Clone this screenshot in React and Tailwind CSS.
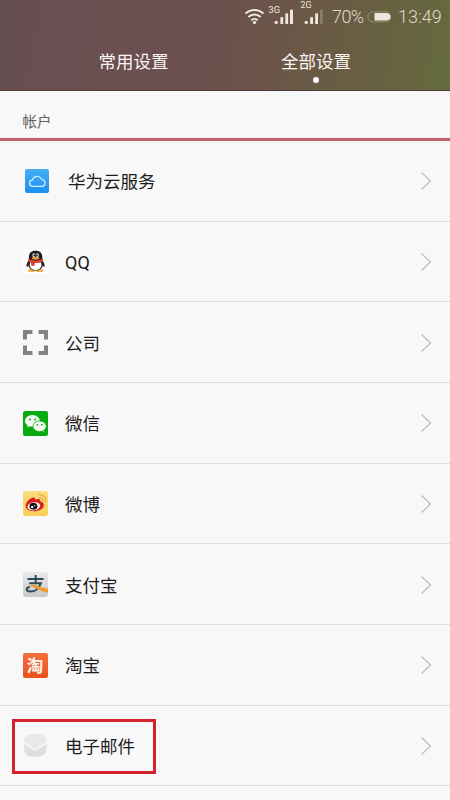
import React from 'react';

function CloudIcon() {
  return (
    <svg viewBox="0 0 24 24" className="ml-[2px] h-6 w-6">
      <defs>
        <linearGradient id="cloud" x1="0" y1="0" x2="0" y2="1">
          <stop offset="0" stopColor="#46aef6" />
          <stop offset="1" stopColor="#1d8fee" />
        </linearGradient>
      </defs>
      <rect width="24" height="24" rx="2.2" fill="url(#cloud)" />
      <path
        d="M7.2 17.4h9.8a3.3 3.3 0 0 0 .6-6.5 1.7 1.7 0 0 0-1.5-1.1 4.6 4.6 0 0 0-8.6 1.1 3.3 3.3 0 0 0-.3 6.5z"
        fill="none"
        stroke="#d4f0ff"
        strokeWidth="1.2"
      />
    </svg>
  );
}

function QQIcon() {
  return (
    <svg viewBox="0 0 25 25" className="h-[25px] w-[25px]">
      <rect width="25" height="25" rx="3" fill="#fdfdfd" />
      <ellipse cx="8.6" cy="21.4" rx="3.8" ry="1.7" fill="#f0b340" />
      <ellipse cx="16.6" cy="21.4" rx="3.8" ry="1.7" fill="#f0b340" />
      <path d="M6.6 10.5C4.2 13 2.9 16.4 3.8 17.6c.6.6 1.6-.4 2.2-1.3h13.2c.6.9 1.6 1.9 2.2 1.3.9-1.2-.5-4.6-2.8-7.1z" fill="#22212a" />
      <ellipse cx="12.6" cy="15.2" rx="7.4" ry="6.4" fill="#22212a" />
      <ellipse cx="12.6" cy="15.8" rx="5.9" ry="5.2" fill="#fff" />
      <path d="M5.9 10.6V7.8C5.9 3.8 8.8 1.7 12.6 1.7s6.7 2.1 6.7 6.1v2.8c-2.8 2.4-10.6 2.4-13.4 0z" fill="#1e1d25" />
      <ellipse cx="10.8" cy="6.2" rx="1.4" ry="2" fill="#e6e6e6" />
      <ellipse cx="14.4" cy="6.2" rx="1.4" ry="2" fill="#e6e6e6" />
      <circle cx="11.2" cy="6.4" r=".8" fill="#111" />
      <circle cx="14" cy="6.4" r=".8" fill="#111" />
      <ellipse cx="12.6" cy="9.3" rx="3.9" ry="1.2" fill="#eba42c" />
      <path d="M5.5 9.6c4.2 2.6 10.1 2.6 14.3 0l.4 2.6c-2.7 1.5-5.5 2-8.5 1.8v2.4l-3.4.6-.2-3.4-3.2-1.3z" fill="#da3f32" />
    </svg>
  );
}

function CompanyIcon() {
  return (
    <svg viewBox="0 0 25 25" className="h-[25px] w-[25px]">
      <path d="M2 9.4V2h7.4M15.6 2H23v7.4M23 15.6V23h-7.4M9.4 23H2v-7.4" fill="none" stroke="#828282" strokeWidth="4" />
    </svg>
  );
}

function WechatIcon() {
  return (
    <svg viewBox="0 0 25 25" className="h-[25px] w-[25px]">
      <rect width="25" height="25" rx="2" fill="#08ac10" />
      <path d="M5 13l-.7 3.4 3.2-1.7z" fill="#f4fcf1" />
      <ellipse cx="9.4" cy="9.9" rx="7.5" ry="5.9" fill="#f4fcf1" />
      <path d="M20 18.2l1 2.8-3-1.4z" fill="#f4fcf1" />
      <ellipse cx="16.6" cy="15.3" rx="6.7" ry="5.3" fill="#f4fcf1" stroke="#08ac10" strokeWidth=".8" />
      <circle cx="6.9" cy="8.4" r="1" fill="#20912a" />
      <circle cx="12" cy="8.4" r="1" fill="#20912a" />
      <circle cx="14.2" cy="13.8" r=".9" fill="#20912a" />
      <circle cx="18.8" cy="13.8" r=".9" fill="#20912a" />
    </svg>
  );
}

function WeiboIcon() {
  return (
    <svg viewBox="0 0 25 25" className="h-[25px] w-[25px]">
      <defs>
        <linearGradient id="weibo" x1="0" y1="0" x2="0" y2="1">
          <stop offset="0" stopColor="#fbdc7c" />
          <stop offset="1" stopColor="#f8cf57" />
        </linearGradient>
      </defs>
      <rect width="25" height="25" rx="3" fill="url(#weibo)" />
      <path
        d="M2.6 14.8c0-3.4 4.6-8 7.7-8.2 1.5-.1 2 .8 1.7 2.2 2.6-1.2 5.7-1.1 5.4 1.6 5.2 1.2 4 5.9.5 8.1-5.2 3.3-15.3 2.1-15.3-3.7z"
        fill="#dc2022"
      />
      <ellipse cx="10.8" cy="15.3" rx="6.3" ry="4.1" transform="rotate(-8 10.8 15.3)" fill="#fff" />
      <ellipse cx="10.4" cy="15.3" rx="4" ry="3.5" fill="#1b1718" />
      <circle cx="9.2" cy="16.1" r="1.2" fill="#fff" />
      <circle cx="11.6" cy="14.6" r=".6" fill="#fff" />
      <path d="M16.5 6.9c2-.3 3.5 1.4 3 3.2M16.3 3.7c4-.6 7 2.9 5.9 6.6" fill="none" stroke="#eca94b" strokeWidth="1.3" strokeLinecap="round" />
    </svg>
  );
}

function AlipayIcon() {
  return (
    <svg viewBox="0 0 25 25" className="h-[25px] w-[25px]">
      <defs>
        <linearGradient id="pay" x1="0" y1="0" x2="0" y2="1">
          <stop offset="0" stopColor="#e9e9e9" />
          <stop offset="1" stopColor="#c9c9c9" />
        </linearGradient>
      </defs>
      <rect width="25" height="25" rx="3" fill="url(#pay)" />
      <path d="M4.5 7h16M12.7 3v8.5M6.2 11.3h11.6c-1.6 4.6-5.6 8.3-10.4 8.3-4.8 0-4.8-4.6-.6-4.6" fill="none" stroke="#2b4a5c" strokeWidth="2" />
      <path d="M5.3 14.2c3.4-1.9 7.4-1.2 10.5 0 3.3 1.3 6 2.1 9.2 2.4v4c-4.8-.4-8.4-2.2-11.3-4-2.8-1.7-5.5-2.7-8.4-2.4z" fill="#f39a2e" />
    </svg>
  );
}

function TaobaoIcon() {
  return (
    <div className="flex h-[25px] w-[25px] items-center justify-center rounded-[2px] bg-linear-to-b from-[#f3703e] to-[#ed501c] text-[16.5px] leading-none font-bold text-[#fff8f0]">
      <span className="-mt-[1px]">淘</span>
    </div>
  );
}

function MailIcon() {
  return (
    <svg viewBox="0 0 25 25" className="h-[25px] w-[25px]">
      <defs>
        <linearGradient id="mail" x1="0" y1="0" x2="0" y2="1">
          <stop offset="0" stopColor="#e6e6e8" />
          <stop offset="1" stopColor="#dcdde1" />
        </linearGradient>
      </defs>
      <rect x="1" y="1" width="22.5" height="22.5" rx="7.5" fill="url(#mail)" />
      <path d="M1.2 10.5l9.7 6.1q1.4.9 2.8 0l9.6-6.1C22.8 4.2 20 1.5 16 1.3H8.5C4.3 1.5 1.7 4.2 1.2 10.5z" fill="#e9e9eb" />
      <path d="M1.5 10.3l9.4 6.3q1.4.9 2.8 0l9.4-6.3" fill="none" stroke="#fbfbfb" strokeWidth="1.2" />
    </svg>
  );
}

const rows = [
  { label: '华为云服务', Icon: CloudIcon, wide: true },
  { label: 'QQ', Icon: QQIcon, latin: true },
  { label: '公司', Icon: CompanyIcon },
  { label: '微信', Icon: WechatIcon },
  { label: '微博', Icon: WeiboIcon },
  { label: '支付宝', Icon: AlipayIcon },
  { label: '淘宝', Icon: TaobaoIcon },
  { label: '电子邮件', Icon: MailIcon, marked: true },
];

function Row({ label, Icon, wide, latin, marked }) {
  return (
    <li className="relative flex h-[80.67px] shrink-0 items-center border-b border-[#dedede] pt-[1px] pr-[18px] pl-[22.5px]">
      <Icon />
      <span
        className={
          (wide ? 'ml-[19.5px]' : 'ml-[17.5px]') +
          (latin ? ' pt-[2px] font-[Roboto] text-[18px]' : ' text-[17.5px]') +
          ' leading-6 text-[#1c1c1c]'
        }
      >
        {label}
      </span>
      <svg viewBox="0 0 12 20" className="ml-auto h-5 w-3">
        <path d="M1.5 1.5L10.5 10l-9 8.5" fill="none" stroke="#b9b9b9" strokeWidth="1.1" />
      </svg>
      {marked && <div className="absolute top-[13px] left-[12px] h-[55px] w-[144px] border-[3px] border-[#d4232f]" />}
    </li>
  );
}

function StatusBar() {
  return (
    <div className="flex h-[33px] items-center justify-end pr-[8px] text-[#e0d9cf]">
      <svg viewBox="0 0 88 33" className="h-[33px] w-[88px]">
        <g fill="none" stroke="#eee6df" strokeWidth="2">
          <path d="M1.5 13.6a12.8 12.8 0 0 1 18 0M4.4 17a8.7 8.7 0 0 1 12.2 0M7.3 20.2a4.6 4.6 0 0 1 6.4 0" />
        </g>
        <circle cx="10.5" cy="22.4" r="1.6" fill="#eee6df" />
        <g fill="#eee6df">
          <circle cx="32.2" cy="22.4" r="1.7" />
          <rect x="36.4" y="17.2" width="2.8" height="6.8" />
          <rect x="41.3" y="13.4" width="2.8" height="10.6" />
          <rect x="46" y="9.7" width="3" height="14.3" />
          <circle cx="62.2" cy="22.4" r="1.7" />
          <rect x="66.2" y="17.2" width="2.8" height="6.8" />
          <rect x="71.2" y="13.4" width="2.8" height="10.6" />
          <rect x="76" y="9.7" width="2.8" height="14.3" opacity=".25" />
          <text x="24.5" y="13" fontSize="8.5" fontFamily="Roboto" textLength="11.5" lengthAdjust="spacingAndGlyphs">3G</text>
          <text x="56.5" y="8" fontSize="8.5" fontFamily="Roboto" textLength="11" lengthAdjust="spacingAndGlyphs">2G</text>
        </g>
      </svg>
      <span className="w-[34px] pt-[1px] font-[Roboto] text-[18px] leading-none font-light tracking-[-0.6px]">70%</span>
      <svg viewBox="0 0 26 12" className="ml-[1px] h-3 w-[26px]">
        <path d="M7 .8H5.8a5 5 0 0 0 0 10H20a5.2 5.2 0 0 0 0-10z" fill="none" stroke="#a29778" strokeWidth=".8" />
        <path d="M7.5 2H19q4.5 0 4.5 3.8T19 9.6H7.5z" fill="#eee9dc" />
      </svg>
      <span className="ml-[5px] w-[44px] pt-[1px] font-[Roboto] text-[18px] leading-none font-light">13:49</span>
    </div>
  );
}

export default function App() {
  return (
    <div className="flex h-[800px] w-[450px] flex-col overflow-hidden bg-[#f8f8f8] font-['Noto_Sans_CJK_SC',sans-serif]">
      <header className="h-[91px] shrink-0 border-b border-[#4d3b3a] bg-[linear-gradient(100deg,#664f50_0%,#6c4f51_35%,#6c504d_48%,#6a5a45_70%,#676440_90%,#646c3e_100%)]">
        <StatusBar />
        <nav className="flex h-[57px] text-[17.5px] leading-6 text-[#faf5f2]">
          <div className="ml-[98.5px] pt-[16px]">常用设置</div>
          <div className="ml-[112.5px] flex flex-col items-center pt-[16px]">
            全部设置
            <i className="mt-[4px] h-[6px] w-[6px] rounded-full bg-white" />
          </div>
        </nav>
      </header>
      <h2 className="h-[50px] shrink-0 border-b-[3px] border-[#c2606c] pt-[18px] pl-[22.5px] text-[14.5px] leading-6 text-[#606060]">帐户</h2>
      <ul className="flex flex-col">
        {rows.map((row) => (
          <Row key={row.label} {...row} />
        ))}
      </ul>
    </div>
  );
}
